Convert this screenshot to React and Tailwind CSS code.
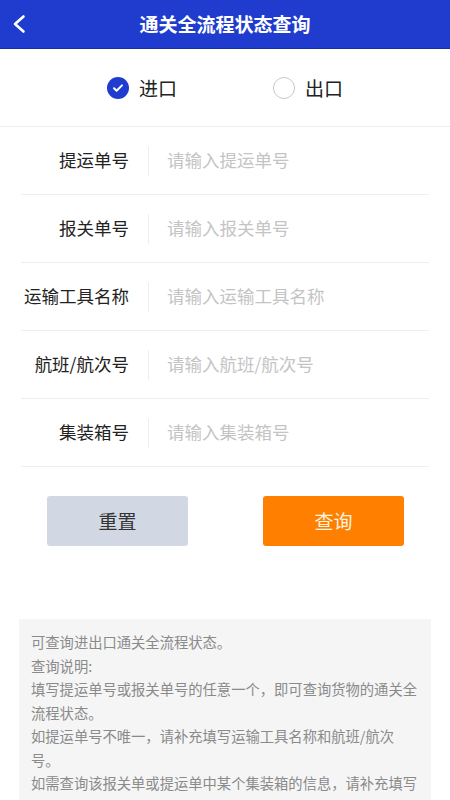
import { useState } from 'react';

const FIELDS = [
  { label: '提运单号', placeholder: '请输入提运单号' },
  { label: '报关单号', placeholder: '请输入报关单号' },
  { label: '运输工具名称', placeholder: '请输入运输工具名称' },
  { label: '航班/航次号', placeholder: '请输入航班/航次号' },
  { label: '集装箱号', placeholder: '请输入集装箱号' },
];

const NOTES = [
  '可查询进出口通关全流程状态。',
  '查询说明:',
  '填写提运单号或报关单号的任意一个，即可查询货物的通关全流程状态。',
  '如提运单号不唯一，请补充填写运输工具名称和航班/航次号。',
  '如需查询该报关单或提运单中某个集装箱的信息，请补充填写集装箱号。',
];

function Radio({ checked, label, onClick }) {
  return (
    <button type="button" onClick={onClick} className="flex items-center gap-[10px]">
      {checked ? (
        <span className="flex h-[22px] w-[22px] items-center justify-center rounded-full bg-[#1f3ccf]">
          <svg width="14" height="14" viewBox="0 0 14 14" fill="none">
            <path d="M3 7.2l2.6 2.6L11 4.4" stroke="white" strokeWidth="2" strokeLinecap="round" strokeLinejoin="round" />
          </svg>
        </span>
      ) : (
        <span className="h-[22px] w-[22px] rounded-full border border-[#c8c8c8]" />
      )}
      <span className="text-[19px] leading-none text-[#222]">{label}</span>
    </button>
  );
}

export default function App() {
  const [dir, setDir] = useState('in');

  return (
    <div className="min-h-[800px] w-[450px] overflow-hidden bg-white" style={{ fontFamily: '"Noto Sans CJK SC", "Noto Sans", sans-serif' }}>
      <header className="relative flex h-[49px] items-center justify-center border-b border-[#18309f] bg-[#1f3ccf]">
        <svg className="absolute left-[10px] top-[13px]" width="20" height="22" viewBox="0 0 20 22" fill="none">
          <path d="M13.5 3.5L5 11l8.5 7.5" stroke="white" strokeWidth="2.6" strokeLinecap="round" strokeLinejoin="round" />
        </svg>
        <h1 className="text-[19px] font-bold text-white">通关全流程状态查询</h1>
      </header>

      <div className="flex h-[78px] items-center border-b border-[#eeeeee] pl-[107px]">
        <Radio checked={dir === 'in'} label="进口" onClick={() => setDir('in')} />
        <div className="ml-[96px]">
          <Radio checked={dir === 'out'} label="出口" onClick={() => setDir('out')} />
        </div>
      </div>

      <div className="mx-[21px]">
        {FIELDS.map((f) => (
          <div key={f.label} className="flex h-[68px] items-center border-b border-[#eeeeee]">
            <label className="w-[108px] shrink-0 text-right text-[17.5px] text-[#222]">{f.label}</label>
            <span className="ml-[19px] h-[30px] w-px bg-[#eeeeee]" />
            <input
              className="ml-[18px] min-w-0 flex-1 bg-transparent text-[17.5px] text-[#222] outline-none placeholder:text-[#c4c4c4]"
              placeholder={f.placeholder}
            />
          </div>
        ))}
      </div>

      <div className="mt-[29px] flex pl-[47px]">
        <button type="button" className="h-[50px] w-[141px] rounded-[3px] bg-[#d2d8e3] text-[19px] text-[#333]">重置</button>
        <button type="button" className="ml-[75px] h-[50px] w-[141px] rounded-[3px] bg-[#ff8000] text-[19px] text-[#fff4e0]">查询</button>
      </div>

      <div className="mx-[19px] mt-[73px] bg-[#f5f5f5] pb-3 pl-3 pr-[11px] pt-[11px] text-[14.3px] leading-[23.5px] text-[#8a8a8a]">
        {NOTES.map((n) => (
          <p key={n}>{n}</p>
        ))}
      </div>
    </div>
  );
}
